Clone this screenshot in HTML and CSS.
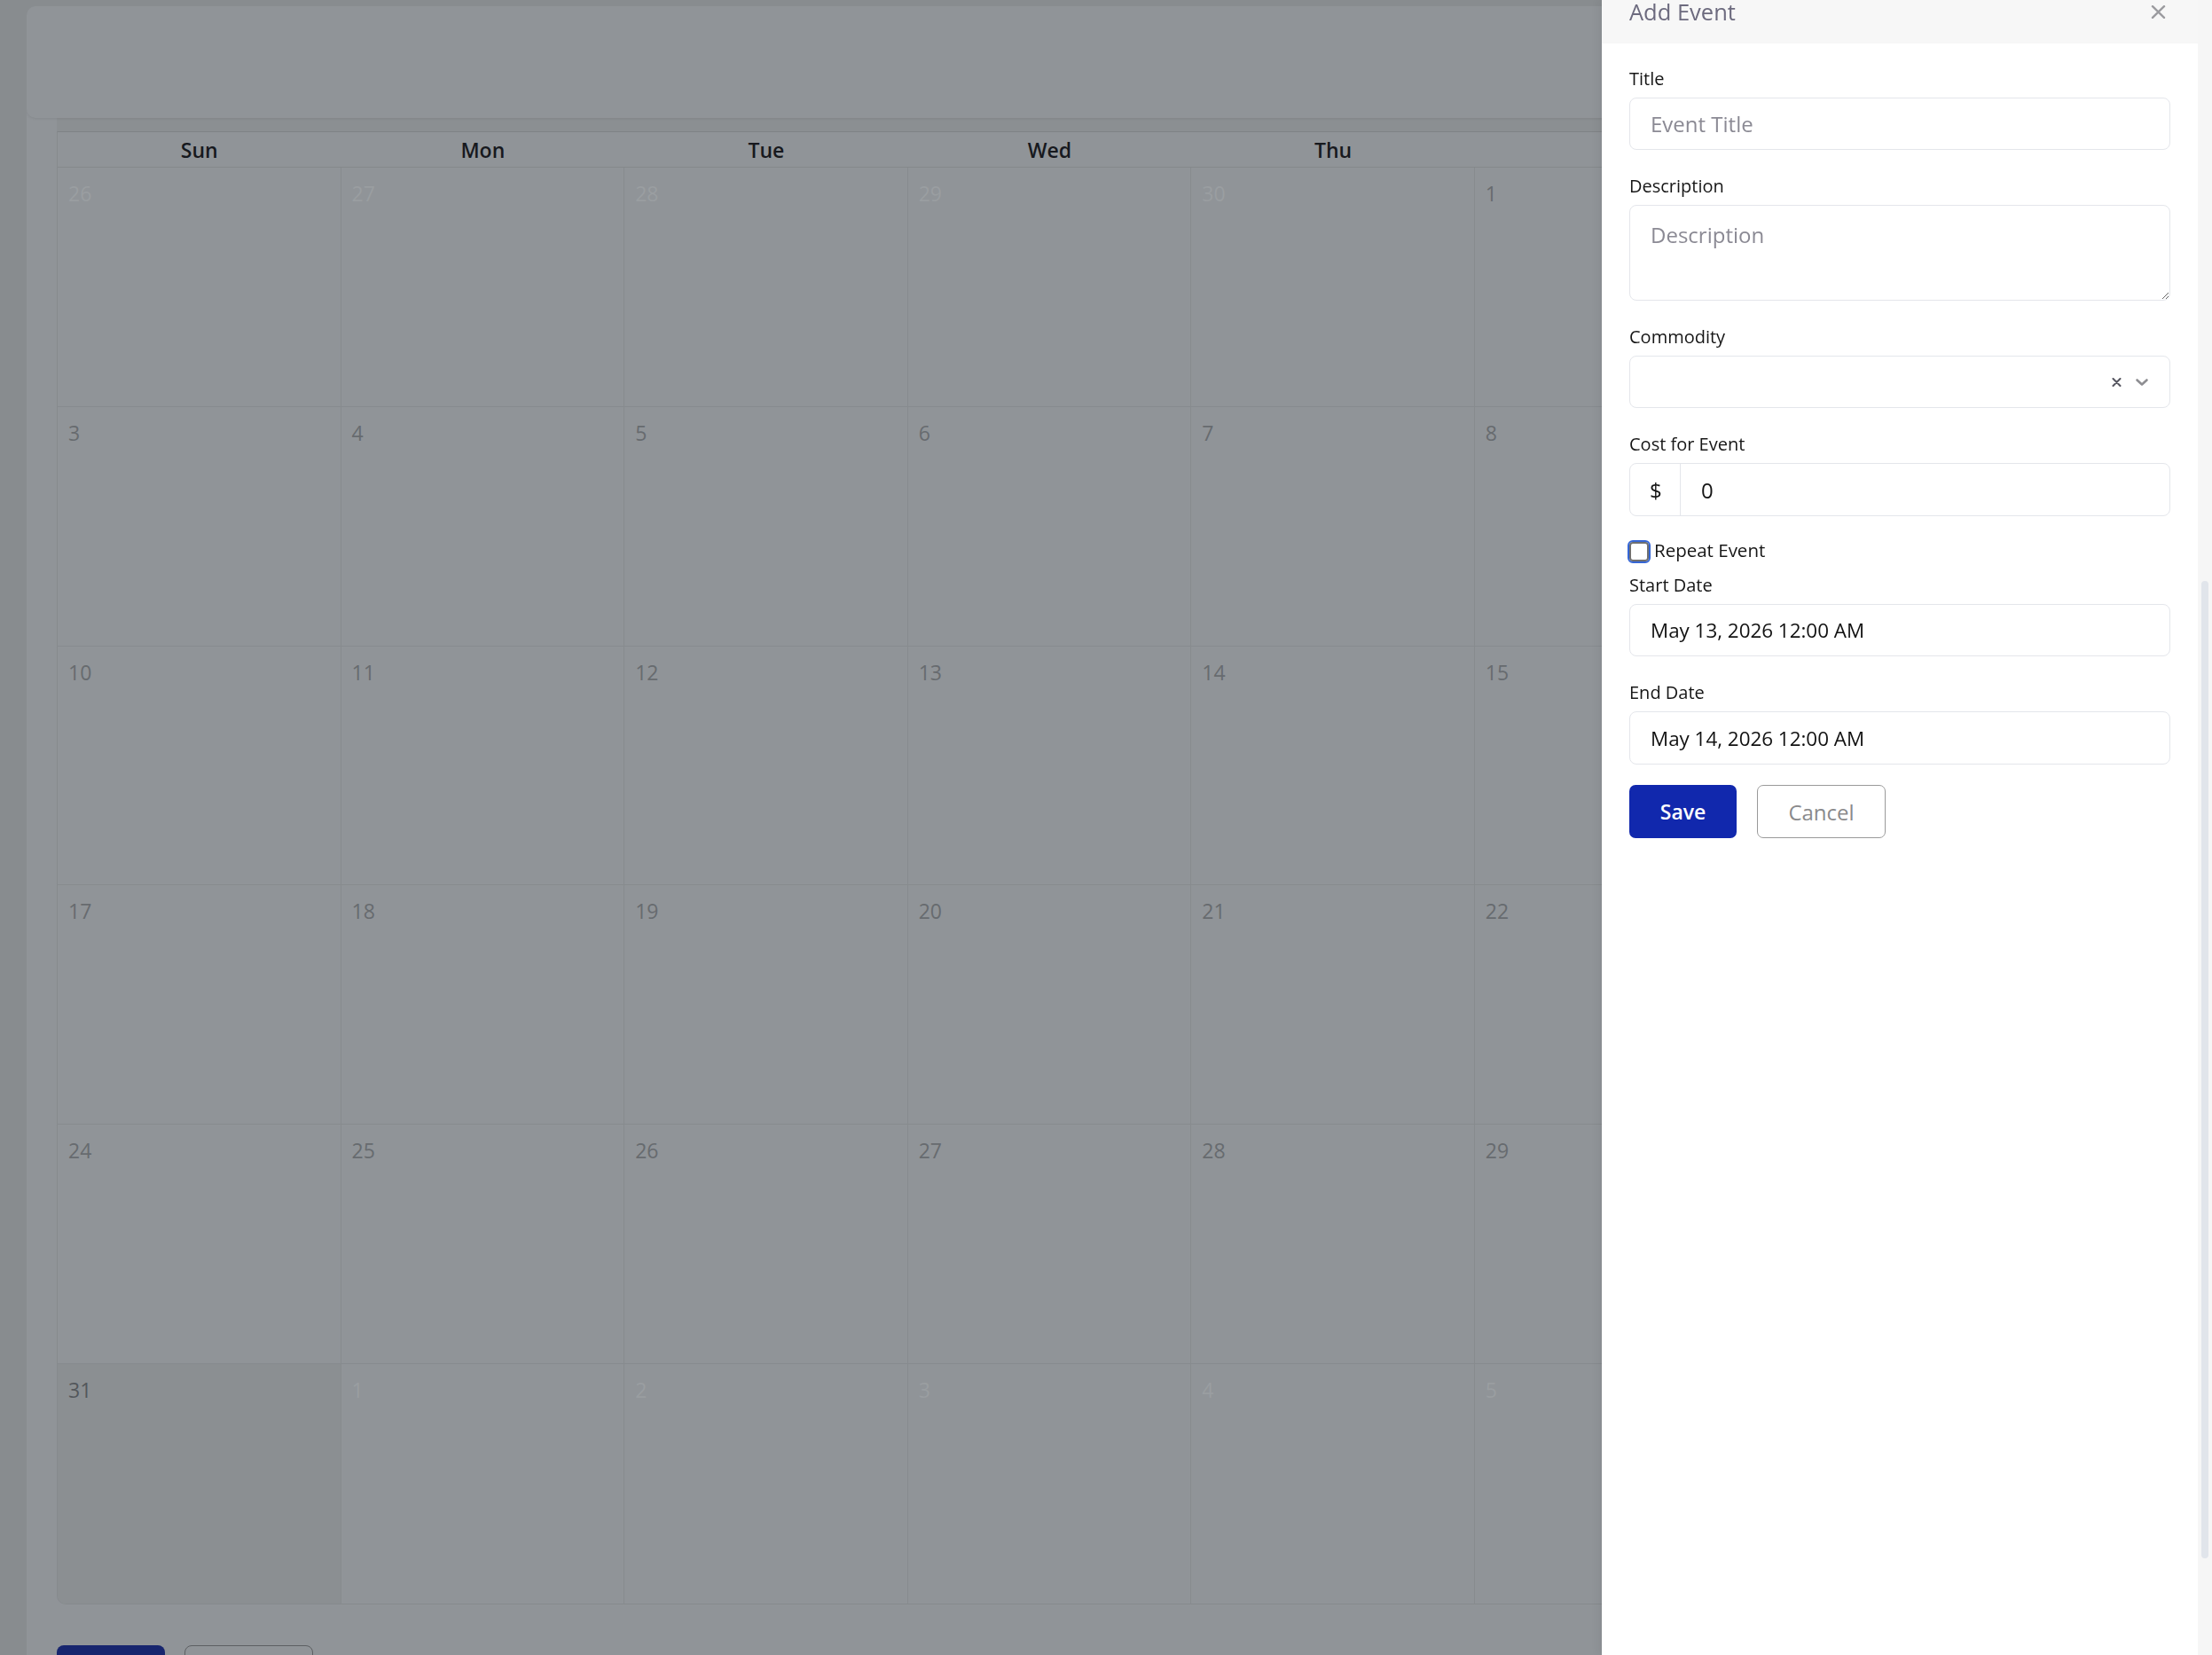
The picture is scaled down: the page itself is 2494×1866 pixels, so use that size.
FILE: index.html
```html
<!DOCTYPE html>
<html lang="en">
<head>
<meta charset="utf-8">
<title>Calendar – Add Event</title>
<link rel="stylesheet" href="styles.css">
</head>
<body>
<div class="app">
  <aside class="rail"></aside>
  <main class="main">
    <div class="topcard"></div>
    <div class="content">
      <div class="band"></div>
      <div class="calendar">
        <div class="dow">Sun</div><div class="dow">Mon</div><div class="dow">Tue</div><div class="dow">Wed</div><div class="dow">Thu</div><div class="dow">Fri</div><div class="dow">Sat</div>

        <div class="day other"><span>26</span></div><div class="day other"><span>27</span></div><div class="day other"><span>28</span></div><div class="day other"><span>29</span></div><div class="day other"><span>30</span></div><div class="day"><span>1</span></div><div class="day"><span>2</span></div>

        <div class="day"><span>3</span></div><div class="day"><span>4</span></div><div class="day"><span>5</span></div><div class="day"><span>6</span></div><div class="day"><span>7</span></div><div class="day"><span>8</span></div><div class="day"><span>9</span></div>

        <div class="day"><span>10</span></div><div class="day"><span>11</span></div><div class="day"><span>12</span></div><div class="day"><span>13</span></div><div class="day"><span>14</span></div><div class="day"><span>15</span></div><div class="day"><span>16</span></div>

        <div class="day"><span>17</span></div><div class="day"><span>18</span></div><div class="day"><span>19</span></div><div class="day"><span>20</span></div><div class="day"><span>21</span></div><div class="day"><span>22</span></div><div class="day"><span>23</span></div>

        <div class="day"><span>24</span></div><div class="day"><span>25</span></div><div class="day"><span>26</span></div><div class="day"><span>27</span></div><div class="day"><span>28</span></div><div class="day"><span>29</span></div><div class="day"><span>30</span></div>

        <div class="day active"><span>31</span></div><div class="day other"><span>1</span></div><div class="day other"><span>2</span></div><div class="day other"><span>3</span></div><div class="day other"><span>4</span></div><div class="day other"><span>5</span></div><div class="day other"><span>6</span></div>
      </div>
      <div class="page-actions">
        <button class="pbtn pbtn-primary" aria-label="Save"></button>
        <button class="pbtn pbtn-outline" aria-label="Cancel"></button>
      </div>
    </div>
  </main>
</div>

<aside class="drawer">
  <div class="drawer-panel">
    <header class="drawer-head">
      <h2 class="drawer-title">Add Event</h2>
      <button class="close" aria-label="Close">
        <svg width="17" height="15" viewBox="0 0 17 15"><path d="M2 1.2 L15 13.8 M15 1.2 L2 13.8" stroke="#9b9b9f" stroke-width="2.4" stroke-linecap="round" fill="none"/></svg>
      </button>
    </header>
    <form class="drawer-body">
      <div class="field">
        <label class="label">Title</label>
        <input class="input" type="text" placeholder="Event Title">
      </div>
      <div class="field">
        <label class="label">Description</label>
        <textarea class="input textarea" placeholder="Description"></textarea>
      </div>
      <div class="field">
        <label class="label">Commodity</label>
        <div class="input select">
          <svg class="sel-clear" width="11" height="10" viewBox="0 0 11 10"><path d="M1.5 1 L9.5 9 M9.5 1 L1.5 9" stroke="#55555f" stroke-width="2" stroke-linecap="round" fill="none"/></svg>
          <svg class="sel-chev" width="16" height="10" viewBox="0 0 16 10"><path d="M2.5 2.5 L8 7.5 L13.5 2.5" stroke="#8e8e92" stroke-width="2.6" stroke-linecap="round" stroke-linejoin="round" fill="none"/></svg>
        </div>
      </div>
      <div class="field field-cost">
        <label class="label">Cost for Event</label>
        <div class="input group">
          <span class="addon">$</span>
          <input class="group-input" type="text" value="0">
        </div>
      </div>
      <label class="check">
        <input type="checkbox" class="checkbox">
        <span>Repeat Event</span>
      </label>
      <div class="field">
        <label class="label">Start Date</label>
        <input class="input date" type="text" value="May 13, 2026 12:00 AM">
      </div>
      <div class="field field-last">
        <label class="label">End Date</label>
        <input class="input date date-end" type="text" value="May 14, 2026 12:00 AM">
      </div>
      <div class="actions">
        <button type="button" class="btn btn-save">Save</button>
        <button type="button" class="btn btn-cancel">Cancel</button>
      </div>
    </form>
  </div>
  <div class="scrollbar"><div class="thumb"></div></div>
</aside>
</body>
</html>
```

FILE: styles.css
```css
* { box-sizing: border-box; }

html, body {
  margin: 0;
  height: 100%;
}

body {
  background: #888c8f;
  font-family: "Open Sans", "Noto Sans", sans-serif;
  overflow: hidden;
}

.app {
  display: flex;
  height: 1866px;
}

.rail {
  width: 30px;
  flex: none;
  background: #888c8f;
}

.main {
  flex: 1;
  margin-top: 7px;
  background: #909498;
  border-top-left-radius: 10px;
  min-width: 0;
  overflow: hidden;
}

.topcard {
  height: 126px;
  background: #909498;
  border-radius: 10px 0 0 10px;
  box-shadow: 0 1px 3px rgba(0, 0, 0, 0.07);
  position: relative;
}

.content {
  padding-left: 34px;
}

.band {
  height: 15px;
  width: 2237px;
  background: #8b8f92;
}

.calendar {
  width: 2237px;
  display: grid;
  grid-template-columns: repeat(7, 319.57px);
  grid-template-rows: 40px repeat(6, 269.8px);
  border-top: 1px solid #7f8386;
  border-left: 1px solid #868a8d;
  border-bottom: 1px solid #868a8d;
  border-bottom-left-radius: 10px;
  overflow: hidden;
}

.dow {
  display: flex;
  align-items: center;
  justify-content: center;
  border-bottom: 1px solid #84888b;
  font-size: 23px;
  font-weight: 600;
  color: #17191e;
}

.day {
  border-right: 1px solid #878b8e;
  border-bottom: 1px solid #878b8e;
  padding: 16px 12px;
  font-size: 23px;
  line-height: 1.2;
  color: #676b6f;
}

.day:nth-last-child(-n+7) { border-bottom: none; }

.day.other { color: #9a9ea1; }

.day.active {
  background: #8b8f92;
  color: #53575b;
}

.page-actions {
  display: flex;
  gap: 22px;
  margin-top: 46px;
}

.pbtn {
  height: 60px;
  border-radius: 8px;
  font-family: inherit;
  font-size: 23px;
}

.pbtn-primary {
  width: 122px;
  background: #17256e;
  border: none;
}

.pbtn-outline {
  width: 145px;
  background: transparent;
  border: 1.5px solid #5c5f62;
}

/* Drawer */
.drawer {
  position: fixed;
  top: 0;
  right: 0;
  width: 688px;
  height: 100%;
  display: flex;
  box-shadow: -3px 0 10px rgba(0, 0, 0, 0.06);
}

.drawer-panel {
  flex: 1;
  background: #ffffff;
  display: flex;
  flex-direction: column;
}

.drawer-head {
  height: 49px;
  background: #f7f7f7;
  display: flex;
  justify-content: space-between;
  align-items: flex-start;
  padding: 0 36px 0 31px;
}

.drawer-title {
  margin: 0;
  font-size: 25.5px;
  line-height: 26px;
  font-weight: 500;
  color: #6c6a7e;
}

.close {
  margin-top: 6px;
  padding: 0;
  border: none;
  background: none;
  display: flex;
}

.drawer-body {
  padding: 27.5px 31px 0;
  display: flex;
  flex-direction: column;
}

.field {
  display: flex;
  flex-direction: column;
  margin-bottom: 28.5px;
}

.field-cost { margin-bottom: 26px; }
.field-last { margin-bottom: 23px; }

.label {
  font-size: 20px;
  line-height: 24px;
  color: #161616;
  margin-bottom: 9.5px;
}

.input {
  height: 59px;
  width: 100%;
  border: 1.5px solid #e4e6eb;
  border-radius: 8px;
  padding: 0 23px;
  font-family: inherit;
  font-size: 24px;
  color: #141414;
  background: #fff;
  outline: none;
}

.input::placeholder { color: #8b8a94; }

.textarea {
  height: 108px;
  padding-top: 19px;
  line-height: 1.2;
  resize: vertical;
}

.select {
  display: flex;
  align-items: center;
  justify-content: flex-end;
  gap: 15px;
}

.group {
  display: flex;
  padding: 0;
  height: 60px;
}

.addon {
  width: 57px;
  flex: none;
  border-right: 1.5px solid #e4e6eb;
  display: flex;
  align-items: center;
  padding-left: 22px;
  font-size: 24px;
  color: #141414;
}

.group-input {
  flex: 1;
  min-width: 0;
  border: none;
  outline: none;
  background: transparent;
  padding: 0 23px;
  font-family: inherit;
  font-size: 24px;
  color: #141414;
}

.check {
  display: flex;
  align-items: flex-start;
  gap: 6px;
  height: 29px;
  margin-bottom: 10.5px;
  font-size: 20.5px;
  line-height: 24px;
  color: #161616;
}

.checkbox {
  appearance: none;
  -webkit-appearance: none;
  margin: 3px 0 0 0;
  width: 22px;
  height: 22px;
  border: 2px solid #707070;
  border-radius: 4px;
  background: #fff;
  outline: 2.5px solid #3566d5;
  outline-offset: 0.5px;
  flex: none;
}

.date {
  font-size: 22.4px;
  color: #111;
}

.date-end { height: 60px; }

.actions {
  display: flex;
  gap: 23px;
}

.btn {
  height: 60px;
  border-radius: 7px;
  font-family: inherit;
}

.btn-save {
  width: 121px;
  background: #1128ad;
  border: none;
  color: #fff;
  font-size: 23px;
  font-weight: 600;
}

.btn-cancel {
  width: 145px;
  background: #fff;
  border: 1.5px solid #9a9a9a;
  color: #8a8a8c;
  font-size: 24px;
}

.scrollbar {
  width: 16px;
  flex: none;
  background: #f6f6f6;
  padding: 655px 4px 0;
}

.thumb {
  width: 8px;
  height: 1102px;
  border-radius: 4px;
  background: #e1e5eb;
}
```
